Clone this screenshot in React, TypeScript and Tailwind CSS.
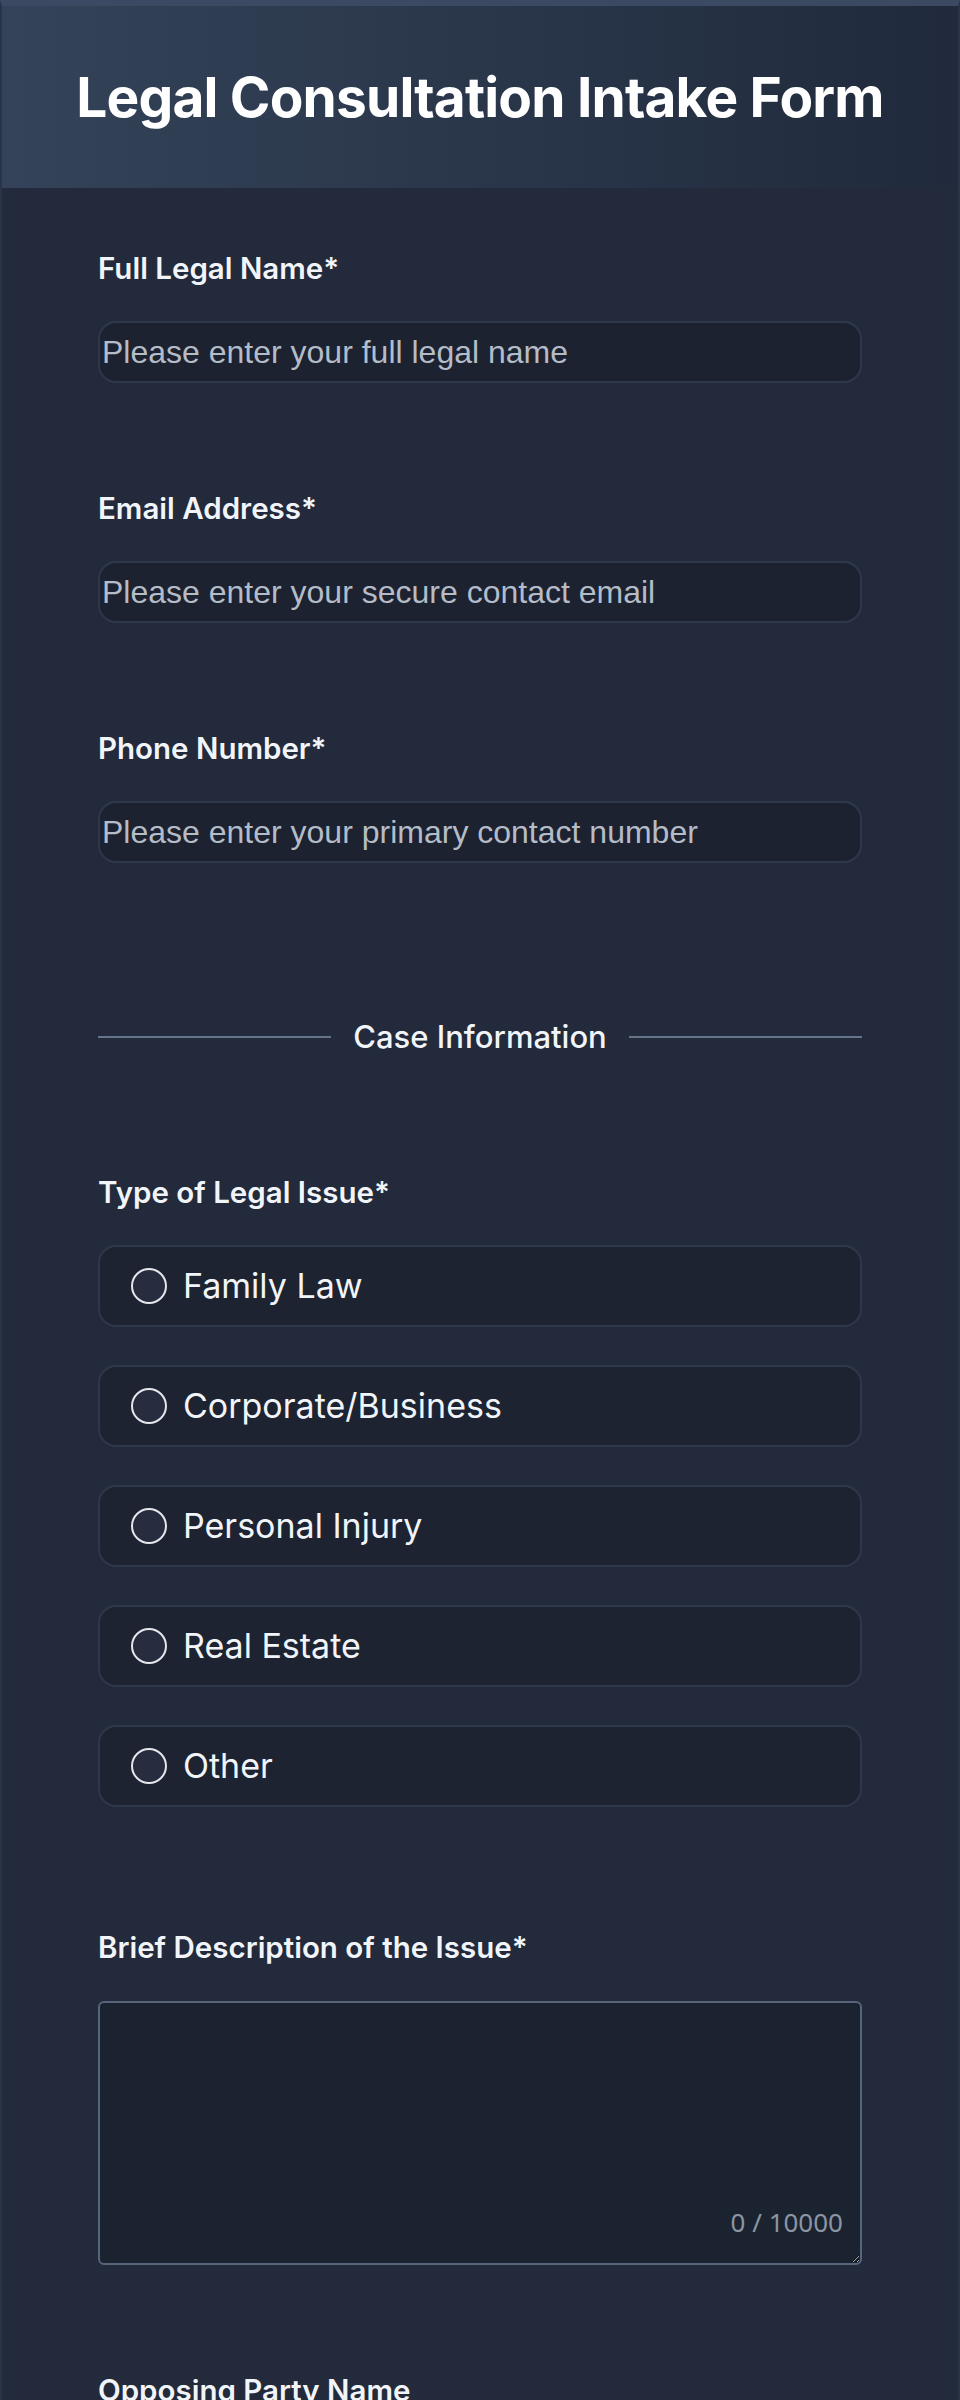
import React, { useState } from 'react';

const issueTypes = ['Family Law', 'Corporate/Business', 'Personal Injury', 'Real Estate', 'Other'];

const FieldLabel: React.FC<{ children: React.ReactNode }> = ({ children }) => (
  <label className="block text-[29.5px] leading-[40px] font-semibold text-[#f1f5f9]">{children}</label>
);

const TextField: React.FC<{ label: string; placeholder: string; type?: string; first?: boolean }> = ({
  label,
  placeholder,
  type = 'text',
  first,
}) => (
  <div className={first ? '' : 'mt-[105px]'}>
    <FieldLabel>{label}</FieldLabel>
    <input
      type={type}
      placeholder={placeholder}
      className="mt-[33px] block w-full h-[62px] rounded-[18px] border-2 border-[#2e3849] bg-[#1c2230] px-[2px] text-[32px] text-[#e2e8f0] placeholder:text-[#b4bcc8] outline-none"
      style={{ fontFamily: '"Liberation Sans", Arial, sans-serif' }}
    />
  </div>
);

export default function App() {
  const [issue, setIssue] = useState<string | null>(null);
  const [description, setDescription] = useState('');

  return (
    <div
      className="min-h-screen bg-[#222a3b] border-x-2 border-x-[#2b3447] border-t-[6px] border-t-[#3b4962]"
      style={{ fontFamily: 'Inter, "Noto Sans", sans-serif' }}
    >
      {/* Header */}
      <header className="h-[182px] flex items-center justify-center bg-linear-to-r from-[#344359] to-[#202a3c]">
        <h1 className="text-[55px] leading-none font-bold tracking-[-0.015em] text-white">
          Legal Consultation Intake Form
        </h1>
      </header>

      <form className="px-[96px] pt-[60px] pb-16" onSubmit={(e) => e.preventDefault()}>
        <TextField first label="Full Legal Name*" placeholder="Please enter your full legal name" />
        <TextField label="Email Address*" type="email" placeholder="Please enter your secure contact email" />
        <TextField label="Phone Number*" type="tel" placeholder="Please enter your primary contact number" />

        {/* Section divider */}
        <div className="mt-[154px] flex items-center gap-[22px] h-[40px]">
          <div className="flex-1 h-[2px] bg-[#64748b]" />
          <span className="text-[31px] leading-[40px] font-medium text-[#f1f5f9]">Case Information</span>
          <div className="flex-1 h-[2px] bg-[#64748b]" />
        </div>

        <div className="mt-[115px]">
          <FieldLabel>Type of Legal Issue*</FieldLabel>
          <div className="mt-[33px] flex flex-col gap-[38px]">
            {issueTypes.map((t) => (
              <label
                key={t}
                className="flex items-center h-[82px] rounded-[18px] border-2 border-[#2e3849] bg-[#1e2331] pl-[31px] cursor-pointer"
                onClick={() => setIssue(t)}
              >
                <span className="w-[36px] h-[36px] rounded-full border-2 border-[#e5e7eb] bg-[#272d3f] flex items-center justify-center">
                  {issue === t && <span className="w-[18px] h-[18px] rounded-full bg-[#e5e7eb]" />}
                </span>
                <span className="ml-[16px] text-[34px] leading-none text-[#f1f5f9]">{t}</span>
              </label>
            ))}
          </div>
        </div>

        <div className="mt-[120px]">
          <FieldLabel>Brief Description of the Issue*</FieldLabel>
          <div className="relative mt-[34px]">
            <textarea
              value={description}
              onChange={(e) => setDescription(e.target.value)}
              maxLength={10000}
              className="block w-full h-[264px] rounded-[6px] border-2 border-[#56657a] bg-[#1b2330] p-3 text-[24px] text-[#e2e8f0] outline-none"
            />
            <span
              className="absolute right-[19px] bottom-[30px] text-[26px] leading-none text-[#8b95a3]"
              style={{ fontFamily: '"Noto Sans", "Open Sans", sans-serif' }}
            >
              {description.length} / 10000
            </span>
          </div>
        </div>

        <div className="mt-[105px]">
          <FieldLabel>Opposing Party Name</FieldLabel>
          <input
            type="text"
            className="mt-[33px] block w-full h-[62px] rounded-[18px] border-2 border-[#2e3849] bg-[#1c2230] px-[2px] text-[32px] text-[#e2e8f0] outline-none"
          />
        </div>
      </form>
    </div>
  );
}
